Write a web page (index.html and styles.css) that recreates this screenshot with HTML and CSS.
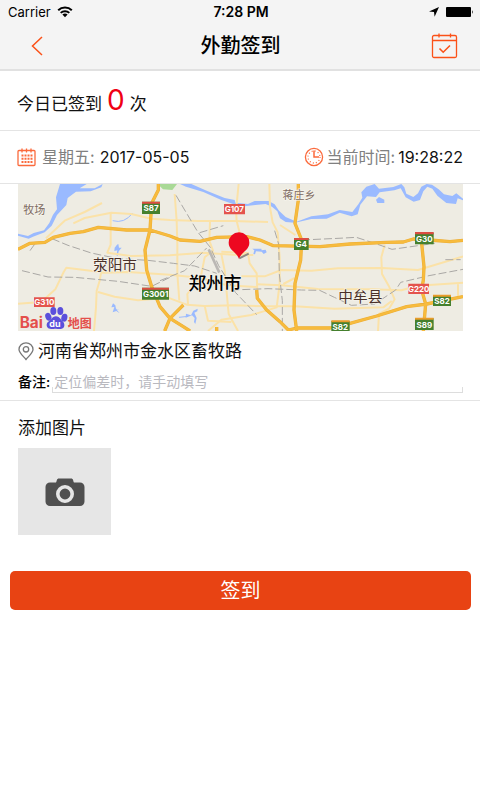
FILE: index.html
```html
<!DOCTYPE html>
<html lang="zh-CN">
<head>
<meta charset="utf-8">
<meta name="viewport" content="width=device-width, initial-scale=1">
<title>外勤签到</title>
<link rel="stylesheet" href="styles.css">
</head>
<body>
<header class="top">
  <div class="status">
    <div class="status-side">
      <span>Carrier</span>
      <svg width="16" height="12" viewBox="0 0 16 12" aria-hidden="true">
        <path d="M1.2 4.3a9.8 9.8 0 0 1 13.6 0M3.7 6.9a6.2 6.2 0 0 1 8.6 0" fill="none" stroke="#000" stroke-width="2"/>
        <path d="M8 11.2 5.4 8.6a3.8 3.8 0 0 1 5.2 0z"/>
      </svg>
    </div>
    <span class="status-time">7:28 PM</span>
    <div class="status-side status-right">
      <svg width="10" height="10" viewBox="0 0 10 10" aria-hidden="true"><path d="M10 0 5.6 9.8 5 5 0 4.5z"/></svg>
      <svg width="29" height="12" viewBox="0 0 29 12" aria-hidden="true"><rect x="1" y="1" width="25" height="10" rx="1"/><path d="M27 4q1.6 2 0 4z"/></svg>
    </div>
  </div>
  <nav class="navbar">
    <button class="icon-button" type="button" aria-label="返回">
      <svg width="12" height="20" viewBox="0 0 12 20"><path d="M11 1 1.5 10 11 19" fill="none" stroke="#fb5118" stroke-width="1.5"/></svg>
    </button>
    <h1 class="title">外勤签到</h1>
    <button class="icon-button" type="button" aria-label="签到记录">
      <svg width="27" height="26" viewBox="0 0 27 26" fill="none" stroke="#fb5118" stroke-width="1.3"><rect x="1.5" y="2.5" width="24" height="22" rx="1.5"/><path d="M1.5 7.5h24M8 .5v4M19.5 .5v4"/><path d="m8.5 15.5 3.7 3.7 6.8-6.7" stroke-width="1.6"/></svg>
    </button>
  </nav>
</header>

<main>
  <section class="row count-row">
    <span>今日已签到</span><strong class="count">0</strong><span>次</span>
  </section>

  <section class="row time-row">
    <div class="time-item">
      <svg width="20" height="19" viewBox="0 0 20 19" fill="none" stroke="#fb6a3c" stroke-width="1.3" aria-hidden="true"><rect x="1" y="2.5" width="17" height="15" rx="1"/><path d="M5 .5v4M9.5 .5v4M14 .5v4"/><path d="M4.5 7.5h11M4.5 10.7h11M4.5 14h11" stroke-width="2" stroke-dasharray="2 1"/></svg>
      <span class="muted">星期五:</span>
      <time class="value">2017-05-05</time>
    </div>
    <div class="time-item time-now">
      <svg width="20" height="20" viewBox="0 0 20 20" fill="none" stroke="#fb6a3c" aria-hidden="true"><circle cx="10" cy="10" r="8.6" stroke-width="1.3"/><path d="M10 3.5V10h5" stroke-width="1.5"/><circle cx="10" cy="10" r="6" stroke-width="1.3" stroke-dasharray="1 2.14"/></svg>
      <span class="muted">当前时间:</span>
      <time class="value">19:28:22</time>
    </div>
  </section>

  <section class="place">
    <svg class="map" viewBox="0 0 1335 441" role="img" aria-label="郑州市地图">
      <rect width="1335" height="441" fill="#eeece3"/>
      <path d="M405 0h72l-14 18-28-2-16-16z" fill="#a9d996"/>
      <g fill="#9abaff">
        <path d="M126 0 206 0 185 13 230 13 254 0 250 10 218 22 174 23 149 42 145 63 117 93 101 125 80 145 45 158 32 164 0 155 0 149 30 156 47 147 78 139 94 117 105 92 117 76 114 40z"/>
        <path d="M486 0 520 0 566 20 620 42 650 48 652 56 690 60 710 51 752 51 770 61 783 80 803 99 836 113 880 97 930 91 965 78 1003 84 1021 61 1033 41 1030 25 1045 8 1070 0 1083 14 1126 9 1150 0 1159 10 1165 29 1186 39 1200 28 1210 8 1226 0 1242 2 1262 16 1278 31 1303 36 1315 28 1335 44 1335 49 1319 43 1314 60 1285 57 1258 35 1243 14 1228 8 1216 22 1206 48 1187 53 1163 40 1148 13 1129 19 1085 25 1074 39 1047 37 1027 62 1019 91 1001 97 965 86 926 104 880 105 831 116 803 114 786 103 778 82 762 68 743 60 712 63 680 67 645 60 610 48 556 24 504 8z"/>
        <path d="m1074 47 9-8 16 8 0 10-21 0z"/>
        <path d="m703 194 27 0 1 5 12-2 3 8-9 5-6-7-17-1-3 9-5-1 3-11zM290 191l7-9 4-2 2 11 8 0-9 11-3 14-4-2 3-15-9 2zM285 358l7 6 2 10 10 3-9-1 10 12-10-7-11 4 5-16-9 1z"/>
        <path d="m504 389 15 5 7-14 13-6-1 8-9 4 7 16-4 18-4-6 2-12-8-8-19 7z"/>
      </g>
      <path d="M284 110q35 10 60-23M510 397l-27 3" fill="none" stroke="#9abaff" stroke-width="3"/>

      <g fill="none" stroke="#fbe2a8" stroke-width="6" stroke-linejoin="round">
        <path d="M84 163 140 110 200 84 252 57M166 118 200 102 280 86 340 90 400 104 456 108 540 111 646 111 750 114"/>
        <path d="M278 86v96l-10 24 70 10 118-2 100-8 90 6 60 1"/>
        <path d="M0 359 70 354 112 316 137 264 145 251 230 262 262 266 330 264 456 272 550 282 626 304 716 309M250 261 245 290 236 320 234 370 228 441M240 324 290 338 360 349 450 341 506 362 560 366 650 364 746 367 830 367 950 374 1096 370 1121 351"/>
        <path d="M470 30 476 111 478 180 478 270 484 350M576 113 574 170 585 200 560 220 548 280 508 330 510 360M662 0 658 40 654 80 656 111 666 150M754 0 756 70 764 115 779 145 785 220 785 300 776 370 700 393 610 407 570 441M610 203 690 207 695 238 716 268 718 320M670 277 740 277 790 258 880 260 960 253 1093 252 1200 258 1335 217"/>
        <path d="M610 210 620 260 632 390 660 441M560 365 570 410 640 414M716 301 790 304 900 315 1060 316 1150 319 1200 305 1335 296M1100 182 1090 220 1092 270 1112 305 1130 346 1114 373 1083 390 1080 441M1320 295v50M786 123 832 153M796 300 830 282"/>
      </g>
      <g fill="none" stroke="#aaa8a5" stroke-width="3" stroke-dasharray="24 9">
        <path d="M12 260 90 279 170 280 300 292 401 307 456 280M102 164 150 184 220 207 300 224 390 229 466 238 530 246 596 268M474 34 500 78 540 145 577 190 602 245 652 325 716 392M545 146 616 125M426 290 500 260 566 192M640 318 750 314 850 318 905 319 949 340 1000 364 1070 360 1133 318 1148 295 1233 275 1335 256M770 140 782 180 784 270 793 350 793 441M852 168 960 163 1015 160 1076 180 1122 196 1250 178M1282 227h46M36 200 49 182 58 178"/>
      </g>
      <path d="M572 196 604 266" stroke="#bbb8b4" stroke-width="8"/>
      <g fill="none" stroke="#ecae36" stroke-width="10" stroke-linejoin="round">
        <path id="highways" d="M0 196 36 178 81 175 106 160 156 148 196 143 241 130 326 138 396 138 456 156 486 168 546 172 596 160 686 158 726 168 766 185 906 188 996 180 1106 175 1156 174 1186 165 1235 168 1296 173 1335 169M421 0v18L401 58 396 138 381 198 386 258 401 308 426 368 456 403 496 428 516 441M496 363 456 403 440 441M841 0v48L831 118 851 168 848 228 831 298 828 378 836 441M716 318 718 343 746 378 786 413 811 438 836 432 936 432 996 418 1076 396 1166 368 1226 360 1335 338M1211 178 1218 248 1216 288 1211 318 1223 360 1216 441M596 429v12"/>
      </g>
      <use href="#highways" fill="none" stroke="#f7bb3d" stroke-width="7"/>

      <g class="shield">
        <path fill="#45802e" d="M372 53h54v37h-54zM372 311h81v36h-81zM828 162h44v36h-44zM1191 146h56v35h-56zM1245 334h54v32h-54zM1191 403h56v35h-56zM940 411h55v30h-55z"/>
        <path d="M372 53h54v6h-54zM828 162h44v6h-44zM1191 144h56v7h-56zM372 311h81v6h-81z" fill="#dc4d42"/>
        <path d="M1245 332h54v6h-54zM1191 401h56v6h-56zM940 409h55v6h-55z" fill="#e99c29"/>
        <path d="M48 340h62v29H48zM618 60h63v31h-63zM1171 299h62v31h-62z" fill="#e4534d"/>
        <text x="399" y="82">S87</text>
        <text x="413" y="340">G3001</text>
        <text x="850" y="190">G4</text>
        <text x="1219" y="174">G30</text>
        <text x="1272" y="360">S82</text>
        <text x="1219" y="431">S89</text>
        <text x="967" y="437">S82</text>
        <text x="79" y="364">G310</text>
        <text x="649" y="85">G107</text>
        <text x="1202" y="323">G220</text>
      </g>
      <g class="town">
        <text class="village" x="49" y="89">牧场</text>
        <text class="village" x="843" y="45">蒋庄乡</text>
        <text x="291" y="258">荥阳市</text>
        <text x="1027" y="355">中牟县</text>
        <text class="city" x="591" y="318">郑州市</text>
      </g>
      <g fill="#5b50dc">
        <ellipse cx="91" cy="398" rx="9" ry="12" transform="rotate(-20 91 398)"/>
        <ellipse cx="106" cy="381" rx="9" ry="12"/>
        <ellipse cx="127" cy="381" rx="9" ry="12"/>
        <ellipse cx="139" cy="401" rx="9" ry="12" transform="rotate(15 139 401)"/>
        <path d="M114 397c9 0 14 9 20 15 8 8 7 22-5 23-9 1-13-2-22 0-12 1-21-2-21-12 0-9 9-12 14-18 4-5 8-8 14-8z"/>
      </g>
      <g class="logo">
        <text x="5" y="433" class="logo-name">Bai</text>
        <text x="94" y="429" class="logo-du">du</text>
        <text x="149" y="432" class="logo-map">地图</text>
      </g>
      <path d="M664 223 692 209" stroke="#8d8983" stroke-width="6"/>
      <path d="M663 225C655 202 632 199 632 176a31 31 0 0 1 62 0C694 199 671 202 663 225z" fill="#ed0820"/>
    </svg>

    <div class="address">
      <svg width="16" height="19" viewBox="0 0 16 19" fill="none" stroke="#777" stroke-width="1.3" aria-hidden="true"><path d="M8 17.5C6 14.8 1 11 1 7.5a7 6.700 0 0 1 14 0c0 3.5-5 7.3-7 10z"/><circle cx="8" cy="7.3" r="2.7"/></svg>
      <span>河南省郑州市金水区畜牧路</span>
    </div>
    <div class="remark">
      <label for="remark">备注:</label>
      <div class="field"><input id="remark" type="text" placeholder="定位偏差时，请手动填写"></div>
    </div>
  </section>

  <section class="photos">
    <h2 class="photos-title">添加图片</h2>
    <button class="photo-add" type="button" aria-label="添加图片">
      <svg width="40" height="28" viewBox="0 0 40 28"><path fill="#505050" d="M5 4.5h6C12 3 11.5.5 14 .5h12c2.5 0 2 2.500 3 4h6a4.500 4.500 0 0 1 4.500 4.500v14.500A4.500 4.500 0 0 1 35 28H5a4.500 4.500 0 0 1-4.500-4.500V9A4.500 4.500 0 0 1 5 4.500z"/><circle cx="20" cy="16" r="7.2" fill="#505050" stroke="#e6e6e6" stroke-width="3.6"/></svg>
    </button>
  </section>

  <button class="submit" type="button">签到</button>
</main>
</body>
</html>
```
FILE: styles.css
```css
* {
  box-sizing: border-box;
}

body {
  margin: 0;
  background: #fff;
  color: #111;
  font-family: Inter, "Noto Sans CJK SC", sans-serif;
  font-size: 17px;
  line-height: 24px;
}

button {
  margin: 0;
  padding: 0;
  border: 0;
  background: none;
  font: inherit;
  cursor: pointer;
}

svg {
  display: block;
  flex: none;
}

.top {
  background: #f4f4f4;
  border-bottom: 2px solid #e1e1e1;
}

.status {
  display: flex;
  align-items: center;
  height: 23px;
  padding: 0 6px 0 8px;
  color: #000;
  font-size: 13px;
}

.status-side {
  display: flex;
  flex: 1;
  align-items: center;
  gap: 6px;
}

.status-right {
  justify-content: flex-end;
}

.status-time {
  font-size: 14px;
  font-weight: 600;
}

.navbar {
  display: flex;
  align-items: center;
  justify-content: space-between;
  height: 46px;
  padding: 0 16px 0 17px;
}

.icon-button {
  display: flex;
  align-items: center;
  justify-content: center;
  width: 40px;
  height: 40px;
}

.title {
  margin: 0;
  color: #000;
  font-size: 20px;
  font-weight: 500;
}

.row {
  display: flex;
  align-items: center;
  padding: 0 17px;
  border-bottom: 1px solid #e4e4e4;
}

.count-row {
  align-items: baseline;
  padding-top: 11px;
  padding-bottom: 12px;
}

.count {
  margin: 0 5px;
  color: #f00014;
  font-size: 28px;
  font-weight: 400;
  line-height: 36px;
}

.time-row {
  justify-content: space-between;
  height: 53px;
  font-size: 16px;
}

.time-item {
  display: flex;
  align-items: center;
  gap: 5px;
}

.time-now {
  gap: 3px;
}

.muted {
  color: #808080;
}

.place {
  padding: 0 17px 7px 18px;
  border-bottom: 1px solid #e4e4e4;
}

.map {
  width: 100%;
  height: auto;
}

.shield text {
  fill: #fff;
  font-size: 24px;
  font-weight: 700;
  text-anchor: middle;
}

.town text {
  fill: #4a3029;
  stroke: #f6f4ec;
  stroke-width: 4px;
  paint-order: stroke;
  font-size: 44px;
  text-anchor: middle;
}

.town .village {
  fill: #7d6a61;
  font-size: 33px;
}

.town .city {
  fill: #000;
  font-size: 53px;
  font-weight: 500;
}

.logo text {
  fill: #e4504c;
  font-weight: 700;
}

.logo .logo-name {
  font-size: 46px;
}

.logo .logo-du {
  fill: #fff;
  font-size: 27px;
}

.logo .logo-map {
  font-size: 36px;
}

.address {
  display: flex;
  align-items: center;
  gap: 4px;
  height: 40px;
}

.remark {
  display: flex;
  align-items: center;
  gap: 2px;
  height: 22px;
  font-size: 14px;
}

.remark label {
  color: #000;
  font-weight: 500;
}

.field {
  flex: 1;
  align-self: stretch;
  padding-left: 2px;
  background:
    linear-gradient(#ddd, #ddd) left bottom / 1px 5px no-repeat,
    linear-gradient(#ddd, #ddd) right bottom / 1px 5px no-repeat;
  border-bottom: 1px solid #ddd;
}

.field input {
  display: block;
  width: 100%;
  height: 100%;
  padding: 0;
  border: 0;
  outline: 0;
  background: none;
  color: #111;
  font: inherit;
}

.field input::placeholder {
  color: #b9b9bf;
  opacity: 1;
}

.photos {
  padding: 15px 18px 36px;
}

.photos-title {
  margin: 0 0 8px;
  font-size: 17px;
  font-weight: 400;
}

.photo-add {
  display: flex;
  align-items: center;
  justify-content: center;
  width: 93px;
  height: 87px;
  background: #e6e6e6;
}

.submit {
  display: block;
  width: calc(100% - 19px);
  height: 39px;
  margin: 0 9px 0 10px;
  border-radius: 5px;
  background: #e84313;
  color: #fff;
  font-size: 20px;
}
```
